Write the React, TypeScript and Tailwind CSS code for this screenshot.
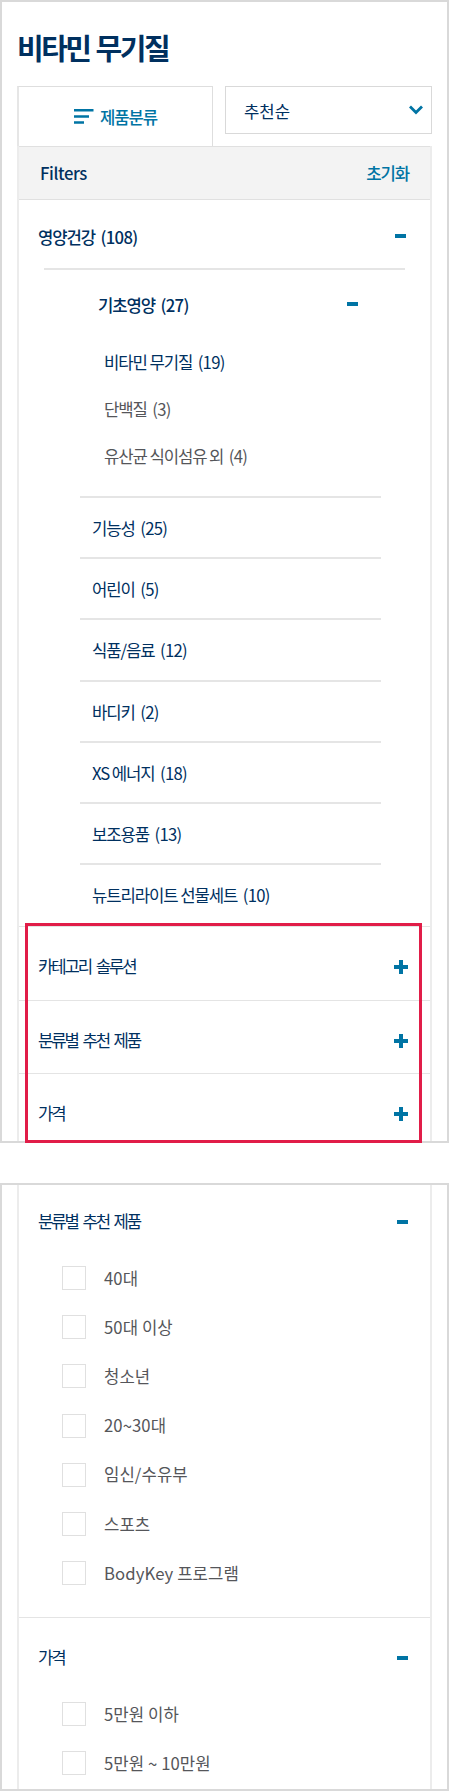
import React from "react";

const Minus = ({ className = "" }: { className?: string }) => (
  <span className={`block h-1 w-[11px] bg-[#0074a4] ${className}`} />
);

const Plus = () => (
  <svg width="14" height="14" viewBox="0 0 14 14" fill="#0074a4">
    <path d="M5 0h4v5h5v4H9v5H5V9H0V5h5z" />
  </svg>
);

const Count = ({ name, n }: { name: string; n: number }) => (
  <span className="whitespace-nowrap tracking-[-1.1px]">
    {name}
    <span className="ml-[5.5px] tracking-[-0.7px]">({n})</span>
  </span>
);

const subs = [
  { name: "기능성", n: 25 },
  { name: "어린이", n: 5 },
  { name: "식품/음료", n: 12 },
  { name: "바디키", n: 2 },
  { name: "XS 에너지", n: 18 },
  { name: "보조용품", n: 13 },
  { name: "뉴트리라이트 선물세트", n: 10 },
];

const Check = ({ label }: { label: string }) => (
  <label className="flex h-[49.2px] items-center pl-[43px]">
    <span className="size-6 border border-[#e0e0e0] bg-white" />
    <span className="ml-[18px] pb-px tracking-[0.08px] text-[#55565a]">{label}</span>
  </label>
);

const heading = "whitespace-nowrap pb-[2px] tracking-[-2.1px] [word-spacing:3px]";

export default function App() {
  return (
    <div className="flex h-[1791px] w-[449px] flex-col gap-10 bg-white font-['Noto_Sans_CJK_KR',sans-serif] text-[16.7px] leading-6 text-[#00305f]">
      <div className="relative h-[1143px] shrink-0">
        <section className="h-[1143px] overflow-hidden border-2 border-[#d9d9d9] px-[15px]">
          <h1 className="flex h-[84px] items-center pt-[5px] text-[29px] font-bold leading-10 tracking-[-2.5px] [word-spacing:2px]">
            비타민 무기질
          </h1>
          <div className="flex h-[60px] items-start justify-between">
            <div className="flex h-[60px] w-[196px] items-center justify-center border-l-2 border-r border-t border-[#dedede] border-l-[#e6e6e6] text-[#0074a4]">
              <svg width="20" height="15" viewBox="0 0 20 15" fill="#0074a4" className="mr-[6px]">
                <path d="M0 0h19.500v2.500H0zM0 6.200h15v2.500H0zM0 12.300h10v2.500H0z" />
              </svg>
              <span className="font-medium tracking-[-1.1px]">제품분류</span>
            </div>
            <div className="flex h-12 w-[207px] items-center justify-between border border-[#d9d9d9] pl-[18px] pr-2">
              <span className="pt-[2px]">추천순</span>
              <svg width="14" height="10" viewBox="0 0 14 10" fill="none" stroke="#0074a4" strokeWidth="2.800">
                <path d="M1 1.500 7 7.500 13 1.500" />
              </svg>
            </div>
          </div>
          <div className="h-[1000px] border-x-2 border-[#ececec]">
            <div className="flex h-[54px] items-center justify-between border-y border-[#e0e0e0] bg-[#f3f3f3] px-[21px] font-medium">
              <span className="tracking-[-0.4px]">Filters</span>
              <span className="tracking-[-1.1px] text-[#0074a4]">초기화</span>
            </div>
            <div className="mx-[19px] flex h-[68px] items-center justify-between pr-[5px] pt-[5px] font-medium">
              <Count name="영양건강" n={108} />
              <Minus className="-mt-[2px]" />
            </div>
            <div className="mx-[25px] h-[2px] bg-[#e5e5e5]" />
            <div className="flex h-[68px] items-center justify-between pl-[79px] pr-[72px] pt-[2px] font-medium">
              <Count name="기초영양" n={27} />
              <Minus className="-mt-[2px]" />
            </div>
            <div className="flex h-[158px] flex-col pl-[85px] text-[#55565a]">
              <div className="flex h-[47px] items-center text-[#00305f]"><Count name="비타민 무기질" n={19} /></div>
              <div className="flex h-[47px] items-center"><Count name="단백질" n={3} /></div>
              <div className="flex h-[47px] items-center"><Count name="유산균 식이섬유 외" n={4} /></div>
            </div>
            <div className="ml-[61px] w-[301px] pb-[2px]">
              {subs.map((s) => (
                <div key={s.name} className="flex h-[61.200px] items-center border-t-2 border-[#e5e5e5] pl-3 pt-px">
                  <Count name={s.name} n={s.n} />
                </div>
              ))}
            </div>
            {["카테고리 솔루션", "분류별 추천 제품", "가격"].map((t) => (
              <div key={t} className="flex h-[73.300px] items-center justify-between border-t border-[#e4e4e4] pl-[19px] pr-[22px] pt-2">
                <span className={heading}>{t}</span>
                <Plus />
              </div>
            ))}
          </div>
        </section>
        <div className="absolute left-[25px] top-[923px] h-[220px] w-[397px] border-[3px] border-[#e11d48]" />
      </div>
      <section className="h-[608px] shrink-0 overflow-hidden border-2 border-[#d9d9d9] px-[15px]">
        <div className="h-[604px] border-x-2 border-[#ececec]">
          <div className="flex h-[68.500px] items-center justify-between pl-[19px] pr-[22px] pt-[6px]">
            <span className={heading}>분류별 추천 제품</span>
            <Minus />
          </div>
          <div className="h-[363.500px]">
            {["40대", "50대 이상", "청소년", "20~30대", "임신/수유부", "스포츠", "BodyKey 프로그램"].map((t) => (
              <Check key={t} label={t} />
            ))}
          </div>
          <div className="flex h-[72.500px] items-center justify-between border-t border-[#e4e4e4] pl-[19px] pr-[22px] pt-2">
            <span className={heading}>가격</span>
            <Minus />
          </div>
          {["5만원 이하", "5만원 ~ 10만원"].map((t) => (
            <Check key={t} label={t} />
          ))}
        </div>
      </section>
    </div>
  );
}
